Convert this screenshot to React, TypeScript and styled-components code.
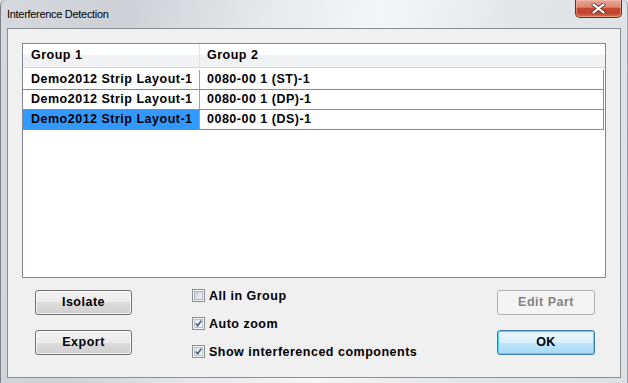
import React from "react";
import styled, { createGlobalStyle, css } from "styled-components";

const Global = createGlobalStyle`
  html, body { margin: 0; padding: 0; width: 628px; height: 383px; overflow: hidden; background: #d9dde1; }
  #root { width: 628px; height: 383px; }
  * { box-sizing: border-box; }
`;

const Window = styled.div`
  width: 628px;
  height: 383px;
  display: flex;
  flex-direction: column;
  background: linear-gradient(100deg, #d6d9dd 0%, #cdd1d5 18%, #e6e8eb 38%, #f5f6f7 55%, #e3e6e9 75%, #dde1e4 100%);
  border-left: 1px solid #7d828a;
  border-right: 1px solid #9aa3a6;
  border-radius: 6px 6px 0 0;
  font-family: "Liberation Sans", Arial, sans-serif;
`;

const TitleBar = styled.div`
  height: 28px;
  flex: none;
  display: flex;
  align-items: flex-start;
  justify-content: space-between;
  padding-left: 6px;
  padding-right: 5px;
`;

const Title = styled.span`
  margin-top: 8px;
  font-size: 11px;
  line-height: 12px;
  letter-spacing: -0.3px;
  color: #000;
`;

const CloseButton = styled.div`
  width: 47px;
  height: 18px;
  border: 1px solid #6b2b23;
  border-top: none;
  border-radius: 0 0 5px 5px;
  background: linear-gradient(#e7a797 0%, #db8874 42%, #c8462f 50%, #c4432c 78%, #d5775c 100%);
  box-shadow: inset 0 0 0 1px rgba(255, 200, 185, 0.45);
  display: flex;
  align-items: center;
  justify-content: center;
`;

const Frame = styled.div`
  flex: 1;
  display: flex;
  padding: 0 6px 5px 6px;
`;

const Client = styled.div`
  flex: 1;
  display: flex;
  flex-direction: column;
  border: 1px solid #8a8f94;
  background: #f0f0f0;
  padding: 14px 14px 0 14px;
`;

const ListBox = styled.div`
  height: 235px;
  flex: none;
  border: 1px solid #828790;
  background: #fff;
  display: flex;
  flex-direction: column;
`;

const Header = styled.div`
  height: 24px;
  display: grid;
  grid-template-columns: 177px 1fr;
  border-bottom: 1px solid #d5d5d5;
  background: linear-gradient(#ffffff 0%, #ffffff 45%, #f1f2f4 50%, #f1f2f4 100%);
`;

const textStyle = css`
  font-family: "Liberation Sans", Arial, sans-serif;
  font-weight: bold;
  font-size: 12.5px;
  letter-spacing: 0.5px;
  color: #000;
  white-space: nowrap;
`;

const HeaderCell = styled.div<{ $first?: boolean }>`
  ${textStyle};
  display: flex;
  align-items: center;
  padding-left: ${(p) => (p.$first ? 8 : 7)}px;
  padding-bottom: 1px;
  border-right: ${(p) => (p.$first ? "1px solid #e3e4e6" : "none")};
`;

const Rows = styled.div`
  padding-top: 2px;
  margin-right: 1px;
`;

const Row = styled.div`
  height: 20px;
  display: grid;
  grid-template-columns: 177px 1fr;
  border-bottom: 1px solid #8a8a8a;
  border-right: 1px solid #8a8a8a;
`;

const Cell = styled.div<{ $first?: boolean; $selected?: boolean }>`
  ${textStyle};
  display: flex;
  align-items: center;
  padding-left: ${(p) => (p.$first ? 8 : 7)}px;
  padding-bottom: 1px;
  background: ${(p) => (p.$selected ? "#3399ff" : "transparent")};
  border-right: ${(p) => (p.$first ? "1px solid #a0a0a0" : "none")};
`;

const Controls = styled.div`
  display: flex;
  margin-top: 12px;
  padding-left: 13px;
  padding-right: 11px;
`;

const ButtonColumn = styled.div`
  display: flex;
  flex-direction: column;
  gap: 15px;
`;

const Button = styled.div<{ $variant?: "normal" | "disabled" | "default"; $width: number }>`
  ${textStyle};
  width: ${(p) => p.$width}px;
  height: 25px;
  border-radius: 3px;
  display: flex;
  align-items: center;
  justify-content: center;
  padding-bottom: 1px;
  ${(p) =>
    p.$variant === "disabled"
      ? css`
          border: 1px solid #adb2b5;
          background: #f4f4f4;
          color: #838383;
        `
      : p.$variant === "default"
      ? css`
          border: 1px solid #3c7fb1;
          background: linear-gradient(#eaf6fd 0%, #d9f0fc 50%, #bee6fd 50%, #a7d9f5 100%);
          box-shadow: inset 0 0 0 1px #48d8fb;
        `
      : css`
          border: 1px solid #707070;
          background: linear-gradient(#f2f2f2 0%, #ebebeb 50%, #dddddd 50%, #cfcfcf 100%);
          box-shadow: inset 0 0 0 1px rgba(255, 255, 255, 0.8);
        `}
`;

const CheckColumn = styled.div`
  display: flex;
  flex-direction: column;
  gap: 15px;
  margin-left: 60px;
  margin-top: -1px;
`;

const CheckRow = styled.label`
  ${textStyle};
  height: 13px;
  display: flex;
  align-items: center;
  gap: 4px;
`;

const Box = styled.span<{ $checked?: boolean }>`
  width: 13px;
  height: 13px;
  flex: none;
  border: 1px solid #8e8f8f;
  background: #f4f4f4;
  padding: 1px;
  display: flex;
`;

const BoxInner = styled.span<{ $checked?: boolean }>`
  flex: 1;
  border: 1px solid ${(p) => (p.$checked ? "#b9c0c8" : "#aeb3b9")};
  background: ${(p) =>
    p.$checked
      ? "linear-gradient(135deg, #e4e7ea 0%, #f7f7f7 100%)"
      : "linear-gradient(135deg, #c9cdd2 0%, #e6e7e9 60%, #f4f4f4 100%)"};
  display: flex;
  align-items: center;
  justify-content: center;
`;

const RightColumn = styled.div`
  display: flex;
  flex-direction: column;
  gap: 15px;
  margin-left: auto;
`;

const Check = ({ checked, label }: { checked: boolean; label: string }) => (
  <CheckRow>
    <Box>
      <BoxInner $checked={checked}>
        {checked && (
          <svg width="7" height="7" viewBox="0 0 7 7">
            <path d="M0.8 3.6 L2.7 5.8 L6.3 0.6" fill="none" stroke="#3f5a92" strokeWidth="1.6" />
          </svg>
        )}
      </BoxInner>
    </Box>
    {label}
  </CheckRow>
);

const rows = [
  ["Demo2012 Strip Layout-1", "0080-00 1 (ST)-1"],
  ["Demo2012 Strip Layout-1", "0080-00 1 (DP)-1"],
  ["Demo2012 Strip Layout-1", "0080-00 1 (DS)-1"],
];

export default function App() {
  return (
    <>
      <Global />
      <Window>
        <TitleBar>
          <Title>Interference Detection</Title>
          <CloseButton>
            <svg width="15" height="11" viewBox="0 0 15 11">
              <path d="M2.5 1.5 L12.5 9.5 M12.5 1.5 L2.5 9.5" stroke="#5b4242" strokeWidth="4" strokeLinecap="round" />
              <path d="M2.5 1.5 L12.5 9.5 M12.5 1.5 L2.5 9.5" stroke="#ffffff" strokeWidth="2.2" strokeLinecap="round" />
            </svg>
          </CloseButton>
        </TitleBar>
        <Frame>
          <Client>
            <ListBox>
              <Header>
                <HeaderCell $first>Group 1</HeaderCell>
                <HeaderCell>Group 2</HeaderCell>
              </Header>
              <Rows>
                {rows.map((r, i) => (
                  <Row key={i}>
                    <Cell $first $selected={i === 2}>
                      {r[0]}
                    </Cell>
                    <Cell>{r[1]}</Cell>
                  </Row>
                ))}
              </Rows>
            </ListBox>
            <Controls>
              <ButtonColumn>
                <Button $width={97}>Isolate</Button>
                <Button $width={97}>Export</Button>
              </ButtonColumn>
              <CheckColumn>
                <Check checked={false} label="All in Group" />
                <Check checked label="Auto zoom" />
                <Check checked label="Show interferenced components" />
              </CheckColumn>
              <RightColumn>
                <Button $width={98} $variant="disabled">
                  Edit Part
                </Button>
                <Button $width={98} $variant="default">
                  OK
                </Button>
              </RightColumn>
            </Controls>
          </Client>
        </Frame>
      </Window>
    </>
  );
}
